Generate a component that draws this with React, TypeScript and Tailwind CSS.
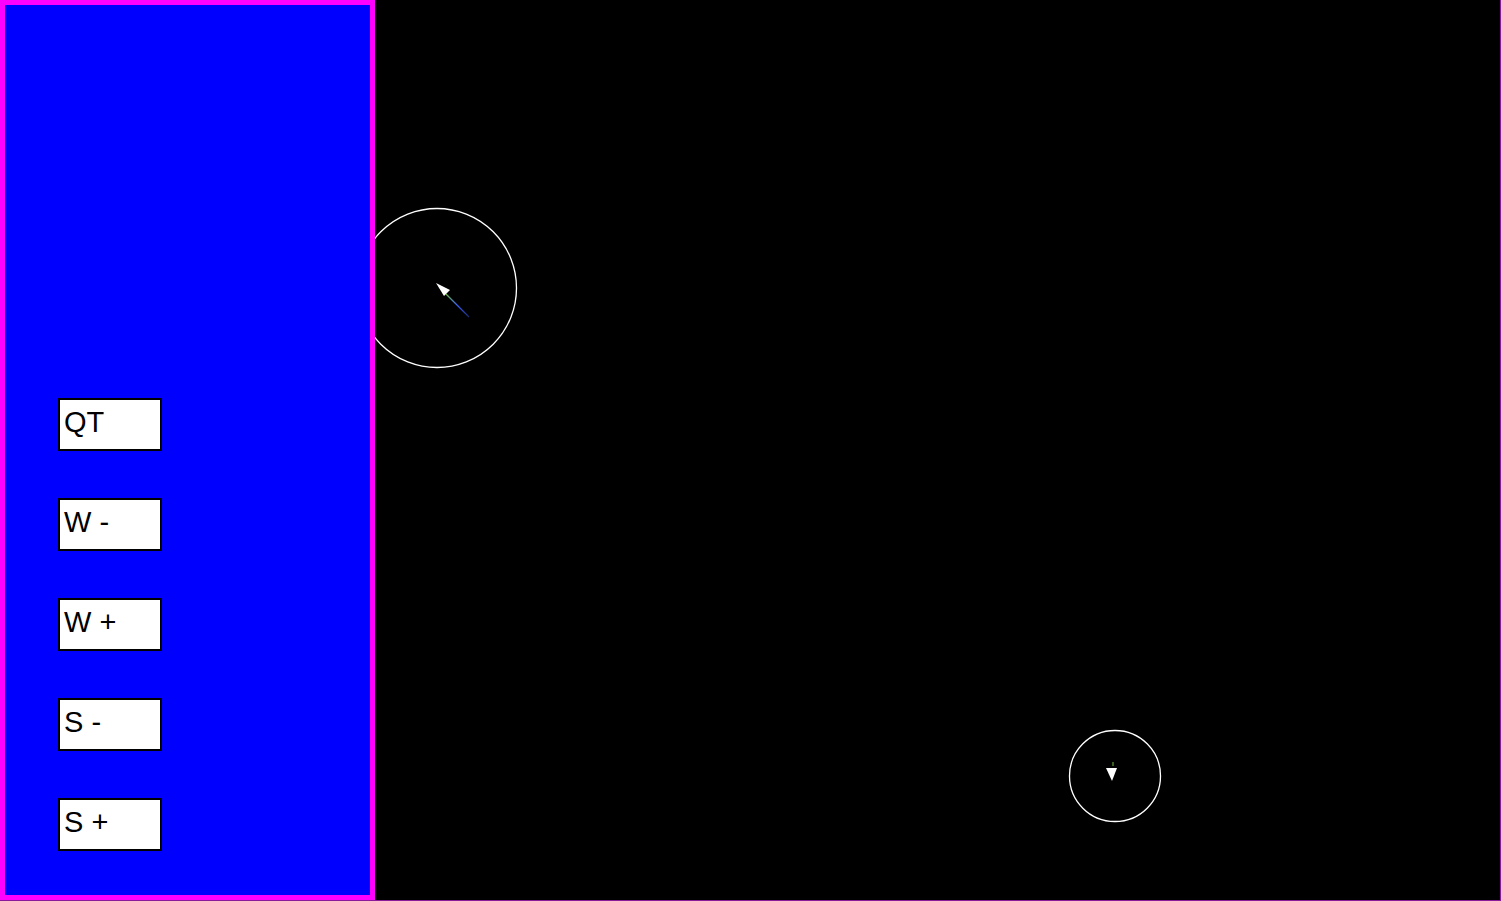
import React from 'react';

const buttons = ['QT', 'W -', 'W +', 'S -', 'S +'];

function ControlButton({ label }: { label: string }) {
  return (
    <div className="w-[104px] h-[53px] border-2 border-black bg-white px-[4px] pt-[6px] text-[29px] leading-[33px] text-black whitespace-pre font-['Liberation_Sans',Arial,sans-serif]">
      {label}
    </div>
  );
}

function Field() {
  return (
    <svg width="1125" height="900" className="block">
      <defs>
        <linearGradient id="trail" x1="0" y1="0" x2="1" y2="1">
          <stop offset="0" stopColor="#6fbf3f" />
          <stop offset="0.5" stopColor="#3a5fff" />
          <stop offset="1" stopColor="#1a2a6a" />
        </linearGradient>
      </defs>

      {/* ship one */}
      <circle cx="62" cy="288" r="79.5" fill="none" stroke="#fff" strokeWidth="1.3" />
      <line x1="71" y1="294" x2="94" y2="317" stroke="url(#trail)" strokeWidth="1.2" />
      <polygon points="61,283 75,290 69,296" fill="#fff" />

      {/* ship two */}
      <circle cx="740" cy="776" r="45.5" fill="none" stroke="#fff" strokeWidth="1.3" />
      <line x1="738" y1="762" x2="738" y2="766" stroke="#6fbf3f" strokeWidth="1" />
      <polygon points="731,768 742,768 737,781" fill="#fff" />
    </svg>
  );
}

export default function App() {
  return (
    <div className="w-[1501px] h-[901px] bg-[#8a1a9a]">
      <div className="flex w-[1500px] h-[900px]">
        <div className="w-[375px] h-[900px] shrink-0 border-[5px] border-[#ff00ff] bg-[#0000ff] flex flex-col justify-end gap-[47px] pl-[53px] pb-[44px] relative z-10">
          {buttons.map((b) => (
            <ControlButton key={b} label={b} />
          ))}
        </div>
        <div className="flex-1 bg-black overflow-hidden">
          <Field />
        </div>
      </div>
    </div>
  );
}
